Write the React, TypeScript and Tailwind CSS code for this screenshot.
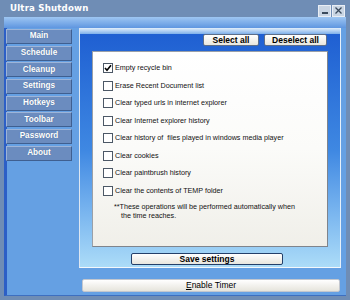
import React from "react";

const items = [
  { label: "Empty recycle bin", checked: true },
  { label: "Erase Recent Document list" },
  { label: "Clear typed urls in internet explorer" },
  { label: "Clear Internet explorer history" },
  { label: "Clear history of  files played in windows media player" },
  { label: "Clear cookies" },
  { label: "Clear paintbrush history" },
  { label: "Clear the contents of TEMP folder" },
];

const side = ["Main", "Schedule", "Cleanup", "Settings", "Hotkeys", "Toolbar", "Password", "About"];

function Check({ checked }: { checked?: boolean }) {
  return (
    <div className="w-[10px] h-[10px] border border-[#4c5866] bg-white flex items-center justify-center shrink-0">
      {checked && (
        <svg width="8" height="8" viewBox="0 0 8 8">
          <path d="M1 4 L3 6.3 L7 1.3" stroke="#000" strokeWidth="1.6" fill="none" />
        </svg>
      )}
    </div>
  );
}

export default function App() {
  return (
    <div
      className="w-[350px] h-[300px] bg-[#6f8db5] flex flex-col overflow-hidden"
      style={{ fontFamily: '"Liberation Sans", Arial, sans-serif' }}
    >
      {/* title bar */}
      <div className="h-[17px] flex items-center pl-[10px] pr-[5px] shrink-0">
        <div
          className="text-white font-bold leading-none tracking-[0.2px]"
          style={{ fontFamily: '"DejaVu Sans", sans-serif', fontSize: "8.6px" }}
        >
          Ultra Shutdown
        </div>
        <div className="ml-auto flex gap-[1px] mt-[4px]">
          <div className="w-[13px] h-[12px] bg-[#c9d5e3] border border-[#e9eef5] flex items-end justify-center pb-[2px]">
            <div className="w-[6px] h-[2px] bg-[#3a4a5c]" />
          </div>
          <div className="w-[13px] h-[12px] bg-[#c9d5e3] border border-[#e9eef5] flex items-center justify-center">
            <svg width="7" height="7" viewBox="0 0 7 7">
              <path d="M0.5 0.5 L6.5 6.5 M6.5 0.5 L0.5 6.5" stroke="#3a4a5c" strokeWidth="1.3" />
            </svg>
          </div>
        </div>
      </div>

      {/* body */}
      <div className="mx-[4px] mb-[4px] flex-1 flex flex-col bg-[#65a0e3] border-l-[3px] border-l-[#2c5fc6] border-b border-b-[#3d6fc0]">
        <div className="h-[11px] shrink-0 bg-gradient-to-b from-[#9ec6f2] to-[#5f96e0] -ml-[3px]" />
        <div className="flex shrink-0">
          {/* sidebar */}
          <div className="w-[73px] flex flex-col gap-[1.67px] pt-[1px] -ml-[1px]">
            {side.map((s) => (
              <div
                key={s}
                className="h-[15px] w-[66px] bg-[#6b8cbf] border border-t-[#9db4d8] border-l-[#9db4d8] border-r-[#3f5f90] border-b-[#3f5f90] flex items-center justify-center text-white font-bold text-[8.2px] leading-none"
                style={{ textShadow: "0 0 1px #4a6890" }}
              >
                {s}
              </div>
            ))}
          </div>

          {/* panel */}
          <div className="w-[262px] h-[240px] flex flex-col border-l border-l-[#dce6f2] border-r border-r-[#e6f0fa] border-b border-b-[#f4f8fc]">
            <div className="h-[6px] bg-gradient-to-b from-[#e2eefa] to-[#7eb0ea] shrink-0" />
            <div className="flex-1 flex flex-col bg-gradient-to-b from-[#1f5fd2] via-[#3f88e2] to-[#acdcf8] px-[11px]">
              <div className="flex justify-end gap-[5px] mr-[2px]">
                <button className="w-[56px] h-[12px] bg-gradient-to-b from-white to-[#e8e6de] border border-[#5c6e8a] rounded-[2px] text-[8.5px] font-bold leading-none text-black">
                  Select all
                </button>
                <button className="w-[63px] h-[12px] bg-gradient-to-b from-white to-[#e8e6de] border border-[#5c6e8a] rounded-[2px] text-[8.5px] font-bold leading-none text-black">
                  Deselect all
                </button>
              </div>
              <div className="mt-[5px] ml-[1px] w-[236px] h-[196px] bg-gradient-to-b from-white via-[#fbfbf9] to-[#f0efe9] border border-[#9aa0a8] border-r-[#7f848c] border-b-[#7f848c] pl-[10px] pt-[11px]">
                <div className="flex flex-col gap-[7.5px]">
                  {items.map((it) => (
                    <div key={it.label} className="flex items-center gap-[2px] h-[10px]">
                      <Check checked={it.checked} />
                      <span className="text-[7.2px] leading-none text-[#111] whitespace-pre">{it.label}</span>
                    </div>
                  ))}
                </div>
                <div className="mt-[6px] ml-[11px] text-[7.2px] leading-[9px] text-[#111]">
                  <div>**These operations will be performed automatically when</div>
                  <div className="pl-[7px]">the time reaches.</div>
                </div>
              </div>
              <div className="flex mt-[6px] ml-[40px]">
                <button className="w-[152px] h-[12px] bg-gradient-to-b from-white to-[#e8e6de] border border-[#24406a] rounded-[2px] text-[8.5px] font-bold leading-none text-black">
                  Save settings
                </button>
              </div>
            </div>
          </div>
        </div>
        <div className="flex mt-[11px] ml-[75px]">
          <button className="w-[258px] h-[13px] bg-gradient-to-b from-white to-[#e6e4dc] border border-[#c3c7cf] rounded-[2px] text-[8.5px] leading-none text-black">
            <span className="underline">E</span>nable Timer
          </button>
        </div>
      </div>
    </div>
  );
}
